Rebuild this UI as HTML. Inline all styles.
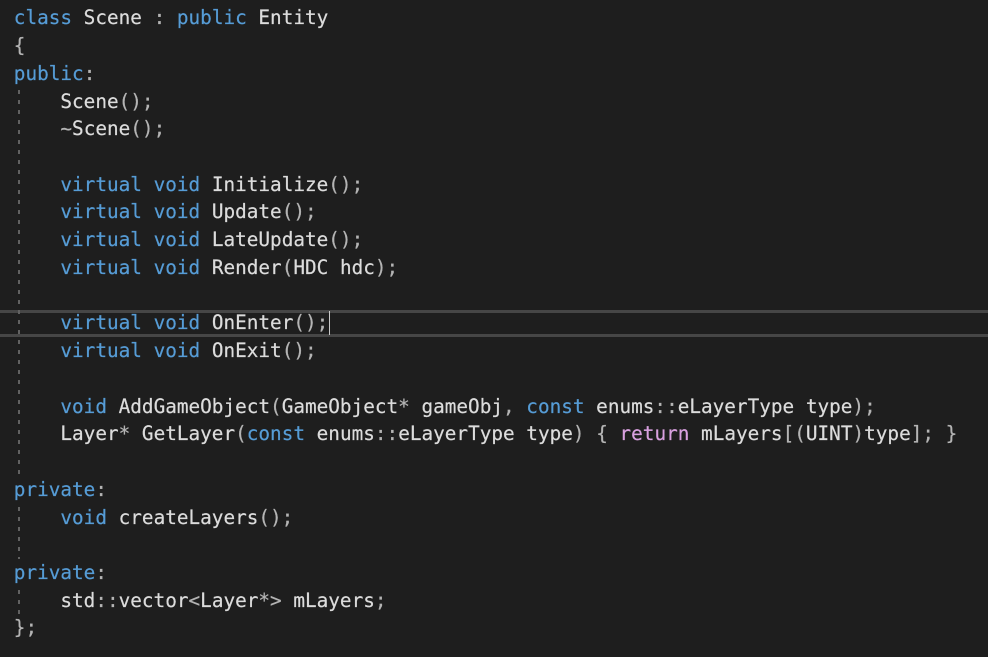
<!DOCTYPE html>
<html>
<head>
<meta charset="utf-8">
<style>
html,body{margin:0;padding:0;background:#1e1e1e;}
body{width:988px;height:657px;overflow:hidden;position:relative;font-family:"DejaVu Sans Mono",monospace;}
pre{position:absolute;margin:0;left:13.8px;top:4.3px;font:19.35px/27.73px "DejaVu Sans Mono",monospace;color:#dcdcdc;white-space:pre;filter:blur(0.25px);-webkit-text-stroke:0.2px currentColor;}
.k{color:#569cd6}.r{color:#d8a0df}.p{color:#b4b4b4}
.hl{position:absolute;left:0;width:988px;height:3px;background:#464646}
.g{position:absolute;left:18px;width:2px;background:repeating-linear-gradient(to bottom,#626262 0 4px,transparent 4px 10px)}
.c{position:absolute;left:328.5px;top:311px;width:1.5px;height:24px;background:#c8c8c8}
</style>
</head>
<body>
<div class="hl" style="top:310px"></div>
<div class="hl" style="top:334px"></div>
<div class="g" style="top:90px;height:385px"></div>
<div class="g" style="top:507px;height:52px"></div>
<div class="g" style="top:590px;height:27px"></div>
<pre><span class="k">class</span> Scene <span class="p">:</span> <span class="k">public</span> Entity
<span class="p">{</span>
<span class="k">public</span><span class="p">:</span>
    Scene<span class="p">();</span>
    <span class="p">~</span>Scene<span class="p">();</span>

    <span class="k">virtual</span> <span class="k">void</span> Initialize<span class="p">();</span>
    <span class="k">virtual</span> <span class="k">void</span> Update<span class="p">();</span>
    <span class="k">virtual</span> <span class="k">void</span> LateUpdate<span class="p">();</span>
    <span class="k">virtual</span> <span class="k">void</span> Render<span class="p">(</span>HDC hdc<span class="p">);</span>

    <span class="k">virtual</span> <span class="k">void</span> OnEnter<span class="p">();</span>
    <span class="k">virtual</span> <span class="k">void</span> OnExit<span class="p">();</span>

    <span class="k">void</span> AddGameObject<span class="p">(</span>GameObject<span class="p">*</span> gameObj<span class="p">,</span> <span class="k">const</span> enums<span class="p">::</span>eLayerType type<span class="p">);</span>
    Layer<span class="p">*</span> GetLayer<span class="p">(</span><span class="k">const</span> enums<span class="p">::</span>eLayerType type<span class="p">)</span> <span class="p">{</span> <span class="r">return</span> mLayers<span class="p">[(</span>UINT<span class="p">)</span>type<span class="p">];</span> <span class="p">}</span>

<span class="k">private</span><span class="p">:</span>
    <span class="k">void</span> createLayers<span class="p">();</span>

<span class="k">private</span><span class="p">:</span>
    std<span class="p">::</span>vector<span class="p">&lt;</span>Layer<span class="p">*&gt;</span> mLayers<span class="p">;</span>
<span class="p">};</span></pre>
<div class="c"></div>
</body>
</html>
